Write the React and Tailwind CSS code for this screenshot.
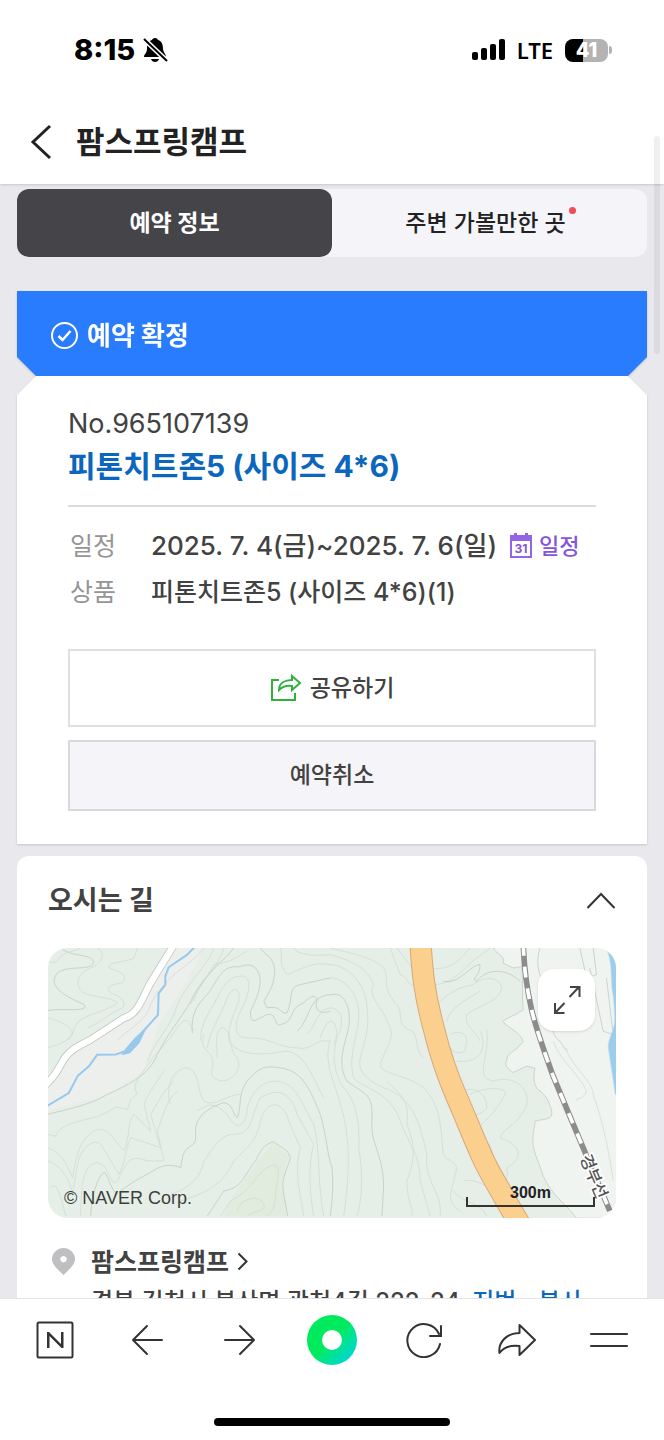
import React, { useState } from 'react'

const contours = [
  // west side
  "M39 0 C75 30 140 15 138 45 C130 70 60 50 30 75 C0 110 40 140 110 170 C130 195 40 180 0 188",
  "M150 0 C175 15 165 45 130 60 C80 80 85 120 110 135 C150 150 200 150 210 165 C180 190 110 200 90 225 C70 250 80 270 60 276",
  "M270 0 L260 30 C230 45 180 40 185 60 C230 75 240 85 225 105 C180 110 170 125 200 140 C230 150 235 165 225 180 C180 200 150 230 120 240",
  "M0 210 C40 220 70 235 75 255 C60 285 30 290 0 300",
  "M0 40 C20 50 30 40 40 25 C60 10 80 10 100 0",
  "M210 276 C250 240 300 215 310 170 C330 130 350 110 370 90 C400 60 440 40 470 0",
  "M0 500 C80 480 130 470 180 440 C270 400 310 370 330 320 C370 240 420 190 440 140 C480 70 530 40 560 0",
  "M0 560 L25 566 C30 540 60 530 115 515 C150 510 180 495 205 478 L240 485 L250 455 L268 440 L262 412 C290 360 340 300 370 270 C400 220 420 200 430 235 L440 246",
  "M0 600 C50 620 60 660 75 690 C85 640 90 580 140 550 C180 530 200 580 230 610 C250 560 240 520 260 500 L310 550 L290 470 C300 440 330 400 350 370",
  "M0 640 C40 650 70 700 75 740 L90 650 C100 600 140 570 160 590 L215 680 C235 640 235 600 250 570 L340 600 L310 500 C330 470 340 440 380 400",
  "M10 720 C30 700 40 750 55 806 M100 806 C100 700 110 650 150 645 C190 650 190 740 215 690 C240 640 250 620 300 640 L350 640 L330 550 C350 500 355 460 390 430",
  "M130 806 C130 760 150 680 172 674 C190 700 200 760 220 730 C260 700 280 690 300 680 C320 670 350 640 400 660 L408 620 C420 590 450 600 445 560 C440 510 480 480 530 465 C560 470 555 500 570 510 C585 480 570 440 600 400 C630 370 640 350 700 360 C770 370 790 430 820 500 C840 570 840 620 855 660 C860 720 855 760 850 806",
  // central ridges
  "M435 256 C430 200 450 170 480 140 C510 100 520 60 560 56 C590 60 600 40 625 60 C650 90 640 130 610 190 C610 230 620 220 650 205 C690 180 680 240 700 230 C740 225 730 180 760 170 C780 160 800 130 810 155 C800 190 820 200 850 190",
  "M460 280 C460 220 490 190 510 150 C530 110 550 80 590 85 C620 100 600 150 580 190 C560 230 560 270 600 270 C680 270 690 300 750 300 C800 310 800 270 850 280",
  "M480 300 C490 240 520 210 540 150 C560 110 580 120 575 160 C560 200 540 240 545 280 C580 330 650 320 720 310 C780 320 800 400 830 450",
  "M510 330 C510 290 500 240 530 240 C560 260 540 300 570 330 C590 370 540 420 500 390 C480 370 510 360 490 320 C470 300 460 290 470 260",
  "M500 0 C480 60 400 120 380 200 C350 260 320 290 300 340",
  "M530 0 C520 50 450 110 430 170 M600 10 C560 30 560 40 500 50 C480 90 450 120 440 160",
  "M640 0 C650 20 670 20 680 50 C690 90 670 130 650 160 L660 180 C700 170 700 200 720 195 C740 150 720 120 760 110 L850 90",
  "M700 0 C710 30 690 40 720 80 C770 60 800 40 850 50 M740 0 C750 20 800 25 850 20",
  "M370 470 C350 420 380 360 420 360 C460 370 450 440 470 460 C500 480 540 440 580 440",
  "M450 490 C480 470 500 460 540 500 C570 560 600 530 600 480 C620 420 650 400 690 400 C750 410 760 460 800 530 C820 600 810 700 830 806",
  "M370 740 C430 720 460 690 470 640 C500 600 520 560 560 560 C620 560 610 500 640 450 C690 420 730 430 750 500 L800 590 C780 660 790 750 800 806",
  "M400 760 C500 730 530 700 560 640 C600 600 630 580 640 520 C660 450 710 460 725 520 L760 600 C740 670 760 740 770 806",
  "M480 806 L530 730 C590 720 590 680 625 640 C640 610 650 590 680 582 C700 600 720 600 730 630 C720 670 700 690 710 740 L722 806",
  "M520 806 L550 760 C610 730 620 690 660 660 C690 640 700 660 690 710 C680 760 690 780 660 806",
  "M570 790 C580 750 640 740 650 770 C660 790 620 790 600 806",
  // east of the ridge
  "M850 0 C930 20 980 30 1010 60 C1030 90 1000 120 1050 170 C1070 200 1050 230 1085 245 C1120 250 1100 310 1130 330 M850 20 C920 40 960 60 980 110 C960 150 1010 180 1025 230 C1050 270 1010 310 1000 350 C1000 380 1080 380 1130 420 C1190 480 1180 560 1190 620 C1210 650 1240 640 1225 680 C1220 720 1190 760 1240 790",
  "M850 50 C900 50 960 110 960 180 C970 240 950 290 940 330 C930 380 970 400 1010 420 C1100 450 1120 530 1140 620 C1130 700 1190 740 1180 806",
  "M850 90 C890 90 930 130 935 190 C940 250 900 320 920 390 C960 430 1030 430 1060 520 C1090 600 1120 620 1120 700 L1150 806",
  "M750 250 C790 220 780 140 855 140 C890 130 915 180 905 240 C890 300 870 350 900 400 C950 440 980 430 975 520 C970 590 1010 620 1010 720 L1005 806",
  "M780 260 C810 230 810 180 855 180 C890 190 890 230 870 270 C850 340 870 390 890 420 C930 460 940 540 935 600 C950 680 945 760 930 806",
  "M820 270 C830 240 840 220 855 220 C870 230 875 260 860 290 M850 280 C820 360 890 440 900 570 C910 640 900 740 890 806",
  "M1020 400 C1060 440 1090 460 1080 530 C1110 600 1100 650 1080 700 C1080 760 1100 780 1095 806",
  "M1030 0 L1060 80 C1090 90 1080 120 1110 110 M1050 0 L1095 60",
  "M1150 60 C1200 70 1240 40 1260 10 L1270 0 M1160 110 C1220 110 1250 60 1290 30 L1330 0",
  "M1190 100 C1240 110 1270 50 1300 50 C1300 90 1270 90 1290 100 C1320 60 1380 60 1420 100",
  "M1160 180 C1190 150 1220 120 1280 110 C1320 80 1360 90 1365 120 C1360 160 1300 170 1260 200 C1250 240 1290 250 1300 280",
  "M1200 220 C1210 180 1250 160 1300 130 M1210 260 C1250 240 1270 270 1255 300 C1260 320 1220 320 1210 300 M1230 340 C1310 350 1320 290 1300 250",
  "M1320 246 C1330 330 1280 390 1340 400 C1400 380 1450 420 1440 470 C1420 530 1370 540 1360 570 C1440 600 1420 640 1380 660 C1390 700 1360 720 1370 740",
  "M1240 430 C1300 410 1320 450 1320 480 C1310 500 1280 500 1270 510 M1270 440 C1300 420 1400 410 1370 450 C1330 520 1280 540 1290 560 C1360 590 1340 660 1320 680",
  "M1250 700 C1300 690 1320 730 1380 730 M1220 730 C1250 770 1300 760 1320 806",
  "M1480 0 C1460 70 1490 80 1500 160 C1520 230 1510 260 1540 280 L1560 310 M1600 0 L1620 90 L1650 80 L1640 0 M1630 60 L1670 250 L1700 260 L1680 90",
  "M1520 280 C1540 340 1600 380 1620 430 C1610 460 1580 450 1590 460 M1560 300 C1560 340 1640 400 1640 440 C1660 500 1680 560 1700 700",
]

const Contours = () => (
  <g fill="none" strokeWidth="2">
    {contours.map((d, i) => (
      <path key={i} d={d} stroke={i % 6 === 0 || i === 11 ? "#bac3bb" : "#ced6cf"} />
    ))}
  </g>
)

const railway = "M1430 -10 C1432 60 1440 120 1455 186 C1470 250 1500 330 1520 386 L1570 506 L1690 790"
const highway = "M1121 -10 C1126 60 1130 130 1162 246 C1180 320 1200 380 1229 446 S1290 595 1315 646 S1385 770 1425 840"
const road = "M378 -6 L309 106 C280 160 270 200 229 211 L129 276 C90 295 60 310 40 350 C20 390 10 395 -6 412"
const stream = "M445 -6 L420 20 L364 58 L354 85 L354 111 L334 136 L332 201 L264 276 L234 310 L205 320 L149 321 L125 355 L91 384 L64 436 L0 474"

const MapView = () => (
  <div className="relative aspect-[569/270] overflow-hidden rounded-[20px] bg-[#e5efe7]">
    <svg viewBox="0 0 1710 810" preserveAspectRatio="xMidYMid slice" className="block h-full w-full">
      <path fill="#ecefeb" d="M439 0 H374 L259 186 L129 276 L59 316 L0 406 V490 L180 440 L290 370 L330 240 L440 60 L470 0Z" />
      <path fill="#dfead9" d="M530 806 L560 740 L640 630 L680 582 L725 625 L705 700 L720 806Z" opacity="0.6" />
      <path fill="#f0f4f0" stroke="#bcc4bd" strokeWidth="2" d="M1345 -2 C1330 10 1380 20 1370 46 L1400 60 L1425 56 C1430 100 1425 150 1430 186 C1390 210 1370 215 1370 221 C1380 240 1420 250 1430 281 C1400 320 1380 310 1380 341 C1370 350 1390 370 1400 374 L1440 355 L1465 361 C1460 390 1460 410 1475 426 C1510 450 1510 480 1515 486 C1520 520 1500 510 1465 521 C1465 540 1455 560 1460 596 C1470 640 1480 650 1490 686 C1520 750 1560 770 1590 812 H1712 V-2Z" />
      <Contours />
      <path fill="#9bcdee" stroke="#cfdde6" strokeWidth="2" d="M1683 10 C1700 60 1690 100 1700 146 C1705 190 1705 220 1703 231 C1695 260 1685 280 1685 296 C1690 340 1700 390 1706 440 L1714 440 V10Z" />
      <path fill="none" stroke="#c2c6c2" strokeWidth="24" d={road} />
      <path fill="none" stroke="#fff" strokeWidth="19" d={road} />
      <path fill="none" stroke="#97c8ee" strokeWidth="6" d={stream} />
      <path fill="#97c8ee" d="M300 236 L264 268 L234 303 L222 322 L248 316 L276 286Z" />
      <path fill="none" stroke="#d9a877" strokeWidth="67" d={highway} />
      <path fill="none" stroke="#fbd08f" strokeWidth="61" d={highway} />
      <path fill="none" stroke="#8b8c8b" strokeWidth="17" d={railway} />
      <path fill="none" stroke="#fff" strokeWidth="11" strokeDasharray="33 33" d={railway} />
      <text transform="translate(1642 686) rotate(67)" className="font-medium" fontSize="50" fill="#555" stroke="#fff" strokeWidth="10" paintOrder="stroke" textAnchor="middle" dominantBaseline="central">경부선</text>
    </svg>
    <span className="absolute bottom-2 left-4 font-['Liberation_Sans',sans-serif] text-[18px] leading-6 text-[#3c403c]">© NAVER Corp.</span>
    <div className="absolute right-[21px] bottom-[11px] w-[129px] text-center">
      <div className="font-['Liberation_Sans',sans-serif] text-base leading-4 font-bold text-[#222]">300m</div>
      <div className="-mt-1 h-2.5 border-2 border-t-0 border-[#333]" />
    </div>
    <button aria-label="지도 확대" className="absolute top-[21px] right-[21px] flex h-[62px] w-[57px] items-center justify-center rounded-2xl bg-white shadow-sm">
      <svg width="28" height="30" viewBox="0 0 28 30" fill="none" stroke="#444" strokeWidth="2">
        <path d="M16.500 12 L26 2 M17 2 H26.500 V12 M11.500 18 L2 28 M2 18 V28 H11.500" />
      </svg>
    </button>
  </div>
)

const StatusBar = () => (
  <div className="flex h-[100px] items-center justify-between pr-[52px] pl-[74px] text-black">
    <div className="flex items-center gap-2">
      <span className="text-[29px] leading-8 font-extrabold">8:15</span>
      <svg width="25" height="26" viewBox="0 0 25 26" aria-label="무음">
        <path fill="#000" d="M12 1 C14 1 14.500 2 15 3 C19 4 20 8 20 12 C20 15 23 17 23 20 H1 C1 17 4 16 4 12 C4 8 5 4 9 3 C9.500 2 10 1 12 1Z M8 22 H16 C15 26 9 26 8 22Z" />
        <path stroke="#fff" strokeWidth="5" d="M0 1 L25 25" />
        <path stroke="#000" strokeWidth="2" d="M1 2 L24 24" />
      </svg>
    </div>
    <div className="flex items-center gap-3">
      <svg width="33" height="22" viewBox="0 0 33 22" fill="#000" aria-hidden="true">
        <rect x="0" y="13" width="6" height="8" rx="2" />
        <rect x="9" y="9" width="6" height="12" rx="2" />
        <rect x="18" y="5" width="6" height="16" rx="2" />
        <rect x="27" y="0" width="6" height="21" rx="2" />
      </svg>
      <span className="font-['Noto_Sans',sans-serif] text-[22px] leading-8 font-semibold">LTE</span>
      <div className="flex items-center gap-px">
        <span className="flex h-[23px] w-[43px] items-center justify-center rounded-[8px] bg-linear-to-r from-black from-[42%] to-[#b3b3b3] to-[42%] text-[20px] leading-5 font-extrabold text-white">41</span>
        <span className="h-2 w-[3px] rounded-r-full bg-[#b3b3b3]" />
      </div>
    </div>
  </div>
)

const Toolbar = () => (
  <footer className="relative shrink-0 border-t border-[#e4e4e6] bg-white pb-3.5">
    <nav className="flex h-[82px] items-center justify-between px-[30px] text-[#333]">
      <button aria-label="네이버 홈" className="flex h-[50px] w-[50px] items-center justify-center">
        <svg width="38" height="38" viewBox="0 0 38 38" fill="none" stroke="currentColor" strokeWidth="2">
          <rect x="1.500" y="1.500" width="35" height="35" rx="1.500" />
          <path fill="currentColor" stroke="none" d="M11 27 V11 H13 L25 23 V11 H27.500 V27 H25.500 L13.500 15 V27Z" />
        </svg>
      </button>
      <button aria-label="뒤로" className="flex h-[50px] w-[50px] items-center justify-center">
        <svg width="32" height="32" viewBox="0 0 32 32" fill="none" stroke="currentColor" strokeWidth="2" strokeLinecap="round" strokeLinejoin="round">
          <path d="M16 2 L2 16 L16 30 M2 16 H31" />
        </svg>
      </button>
      <button aria-label="앞으로" className="flex h-[50px] w-[50px] items-center justify-center">
        <svg width="32" height="32" viewBox="0 0 32 32" fill="none" stroke="currentColor" strokeWidth="2" strokeLinecap="round" strokeLinejoin="round">
          <path d="M16 2 L30 16 L16 30 M30 16 H1" />
        </svg>
      </button>
      <button aria-label="그린닷" className="flex h-[50px] w-[50px] items-center justify-center rounded-full bg-linear-to-br from-[#00ea5e] from-50% to-[#08cdf0]">
        <span className="h-5 w-5 rounded-full bg-white" />
      </button>
      <button aria-label="새로고침" className="flex h-[50px] w-[50px] items-center justify-center">
        <svg width="36" height="36" viewBox="0 0 36 36" fill="none" stroke="currentColor" strokeWidth="2" strokeLinecap="round">
          <path d="M34 22 A16.500 16.500 0 1 1 33 12 M35 4 V14 H24" />
        </svg>
      </button>
      <button aria-label="공유" className="flex h-[50px] w-[50px] items-center justify-center">
        <svg width="38" height="34" viewBox="0 0 38 34" fill="none" stroke="currentColor" strokeWidth="2" strokeLinejoin="round">
          <path d="M21.500 2 L37 17 L21.500 32 V23 C14 22 6 24 1.500 30 C0 20 8 10 21.500 10Z" />
        </svg>
      </button>
      <button aria-label="메뉴" className="flex h-[50px] w-[50px] items-center justify-center">
        <svg width="38" height="16" viewBox="0 0 38 16" fill="none" stroke="currentColor" strokeWidth="2" strokeLinecap="round">
          <path d="M1 2 H37 M1 14 H37" />
        </svg>
      </button>
    </nav>
    <div className="mx-auto mt-[37px] h-2 w-[236px] rounded-full bg-black" />
  </footer>
)

const App = () => {
  const [tab, setTab] = useState('info');
  const [open, setOpen] = useState(true);

  const tabClass = (name) =>
    tab === name
      ? "w-1/2 rounded-xl bg-[#454449] font-bold text-white"
      : "w-1/2 rounded-xl pr-2 font-medium text-[#222]";

  return (
    <div className="relative flex h-screen flex-col overflow-hidden bg-[#e8e8ed] font-['Inter','Noto_Sans_CJK_KR',sans-serif] text-[#424242]">
      <header className="relative z-10 shrink-0 bg-white shadow">
        <StatusBar />
        <div className="flex h-[84px] items-center gap-6 pl-[30px]">
          <button aria-label="이전">
            <svg width="22" height="36" viewBox="0 0 22 36" fill="none" stroke="#222" strokeWidth="3">
              <path d="M20 2 L3 18 L20 34" />
            </svg>
          </button>
          <h1 className="text-[31px] leading-10 font-bold text-[#222]">팜스프링캠프</h1>
        </div>
      </header>

      <main className="min-h-0 flex-1 overflow-hidden px-[17px] pt-[5px]">
        <div className="mb-[34px] flex h-[68px] rounded-xl bg-[#f5f5f9] text-[23px]">
          <button className={tabClass('info')} onClick={() => setTab('info')}>예약 정보</button>
          <button className={tabClass('around')} onClick={() => setTab('around')}>
            <span className="relative">
              주변 가볼만한 곳
              <span className="absolute -top-0.5 -right-2.5 h-[7px] w-[7px] rounded-full bg-[#f04c56]" />
            </span>
          </button>
        </div>

        <section className="mb-3 drop-shadow-[0_1px_1px_rgba(0,0,0,0.15)]">
          <div className="flex h-[85px] items-center gap-2 bg-[#2a7cff] pt-1 pl-[33px] text-white [clip-path:polygon(0_0,100%_0,100%_66px,calc(100%-19px)_100%,19px_100%,0_66px)]">
            <svg width="29" height="29" viewBox="0 0 29 29" fill="none" stroke="currentColor" strokeWidth="2">
              <circle cx="14.500" cy="14.500" r="12.500" />
              <path d="M8.500 15 L12.500 19 L20.500 10" strokeWidth="2.500" />
            </svg>
            <h2 className="text-[26px] leading-9 font-bold">예약 확정</h2>
          </div>
          <div className="bg-white px-[51px] pt-[30px] pb-[33px] [clip-path:polygon(19px_0,calc(100%-19px)_0,100%_19px,100%_100%,0_100%,0_19px)]">
            <p className="text-[27px] leading-9">No.965107139</p>
            <h3 className="mt-0.5 border-b-2 border-[#dcdcde] pb-[17px] text-[30px] leading-11 font-bold text-[#0b66bd]">피톤치트존5 (사이즈 4*6)</h3>
            <dl className="mt-4 grid grid-cols-[83px_1fr] text-[25px] leading-[46px]">
              <dt className="pl-0.5 text-[#959595]">일정</dt>
              <dd className="flex items-center gap-3 text-[26px] font-medium whitespace-nowrap">
                2025. 7. 4(금)~2025. 7. 6(일)
                <a href="#calendar" className="flex items-center gap-1.5 text-[22px] text-[#8456e0]">
                  <svg width="24" height="26" viewBox="0 0 24 26" aria-hidden="true">
                    <path fill="none" stroke="#9365e6" strokeWidth="2" d="M2 5 H22 V24 H2Z" />
                    <path fill="#9365e6" d="M1 2 H5 V0 H8 V2 H16 V0 H19 V2 H23 V8 H1Z" />
                    <text x="12" y="20" fontSize="12" fontWeight="700" textAnchor="middle" fill="#8456e0">31</text>
                  </svg>
                  일정
                </a>
              </dd>
              <dt className="pl-0.5 text-[#959595]">상품</dt>
              <dd className="font-medium">피톤치트존5 (사이즈 4*6)(1)</dd>
            </dl>
            <button className="mt-[34px] flex h-[78px] w-full items-center justify-center gap-2 border-2 border-[#e0e0e2] text-[23px] font-medium">
              <svg width="32" height="28" viewBox="0 0 32 28" fill="none" stroke="#2fb13c" strokeWidth="2">
                <path d="M9 6 H2 V26 H25 V19" />
                <path d="M22 2 L30 9 L22 16 V12 C16 11 12 13 9 16 C9 9 15 6 22 6Z" />
              </svg>
              공유하기
            </button>
            <button className="mt-[13px] h-[71px] w-full border-2 border-[#d8d8dc] bg-[#f5f5f9] text-[23px] font-medium">예약취소</button>
          </div>
        </section>

        <section className="rounded-xl bg-white px-[31px] pt-[22px]">
          <div className="flex items-center justify-between">
            <h2 className="text-[27px] leading-[46px] font-bold">오시는 길</h2>
            <button aria-label="접기" onClick={() => setOpen(!open)}>
              <svg width="30" height="18" viewBox="0 0 30 18" fill="none" stroke="#333" strokeWidth="2">
                <path d="M1.500 16 L15 2 L28.500 16" />
              </svg>
            </button>
          </div>
          {open && (
            <div className="pt-6">
              <MapView />
              <div className="flex gap-4 pt-[22px] pl-1">
                <svg width="23" height="27" viewBox="0 0 23 27" className="mt-2 shrink-0" aria-hidden="true">
                  <path fill="#bfbfc1" fillRule="evenodd" d="M11.500 0 A11.300 11.300 0 0 1 23 11 C23 16 19 20 11.500 27 C4 20 0 16 0 11 A11.300 11.300 0 0 1 11.500 0Z M11.500 8 a3.200 3.200 0 1 0 .01 0Z" />
                </svg>
                <div className="whitespace-nowrap">
                  <a href="#place" className="flex items-center gap-2 text-[25px] leading-[44px] font-bold">
                    팜스프링캠프
                    <svg width="11" height="19" viewBox="0 0 11 19" fill="none" stroke="#333" strokeWidth="2">
                      <path d="M1.500 1.500 L9.500 9.500 L1.500 17.500" />
                    </svg>
                  </a>
                  <p className="flex gap-3 text-[24px] leading-9 font-medium">
                    경북 김천시 봉산면 광천4길 222-24
                    <button className="text-[#0b66bd]">지번</button>
                    <button className="ml-2.5 text-[#0b66bd]">복사</button>
                  </p>
                </div>
              </div>
            </div>
          )}
        </section>
      </main>

      <Toolbar />
      <div className="absolute top-[136px] right-1 z-20 h-[218px] w-[6px] rounded-full bg-black/6" />
    </div>
  );
};

export default App
